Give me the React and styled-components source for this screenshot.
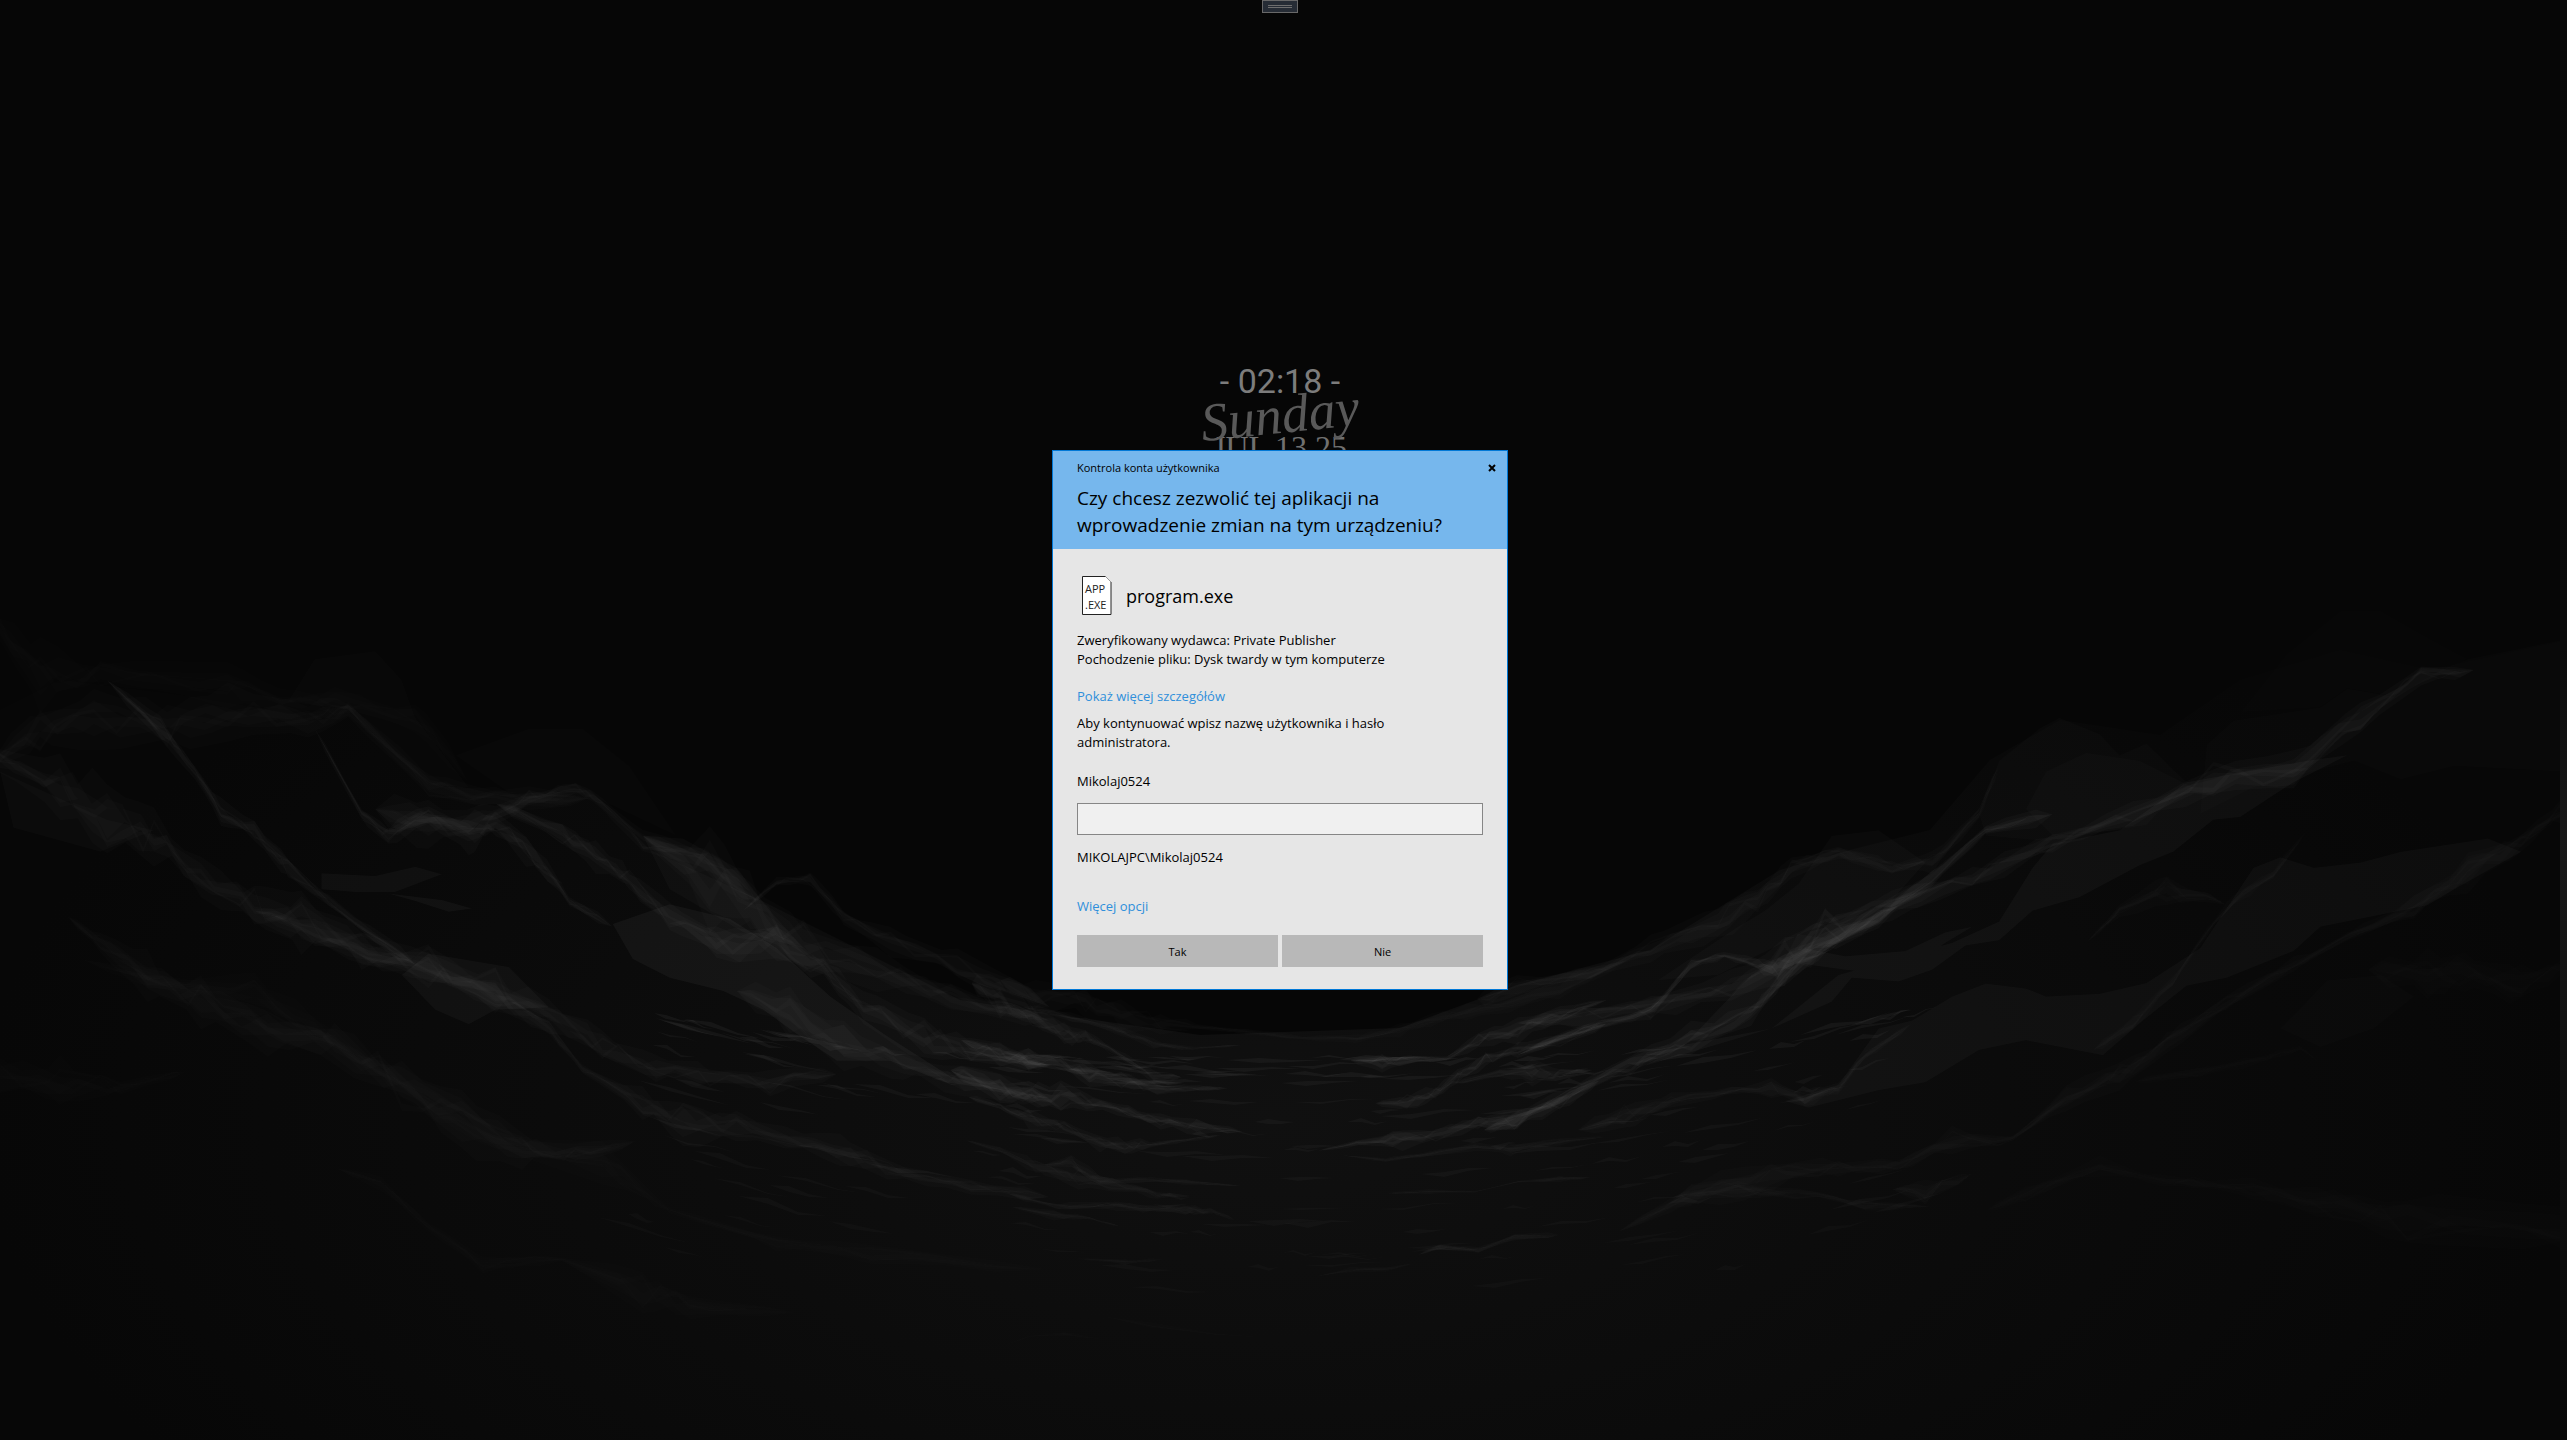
import React from "react";
import styled, { createGlobalStyle } from "styled-components";

const GlobalStyle = createGlobalStyle`
  *, *::before, *::after { box-sizing: border-box; }
  html, body { margin: 0; background: #060606; }
  body { font-family: "Open Sans", "Noto Sans", sans-serif; color: #000; }
  h1, h2, p { margin: 0; font-weight: 400; }
`;

const Desktop = styled.div`
  position: relative;
  display: flex;
  min-height: 100vh;
  overflow: hidden;
`;

const Wallpaper = styled.svg`
  position: absolute;
  inset: 0;
  width: 100%;
  height: 100%;
`;

const Monitor = styled.main`
  position: relative;
  flex: 1;
  display: grid;
  place-items: center;
`;

const NextMonitor = styled.div`
  position: relative;
  width: 7px;
  background: linear-gradient(#090909, #0b0b0b 45%, #181818 58%, #101010 75%, #080808);
`;

const TopHandle = styled.div`
  position: absolute;
  top: 0;
  left: 50%;
  transform: translateX(-50%);
  display: flex;
  flex-direction: column;
  justify-content: center;
  gap: 1px;
  width: 36px;
  height: 13px;
  padding: 0 5px;
  border: 1px solid #686868;
  background: #262c35;
`;

const HandleLine = styled.span`
  height: 1px;
  background: #6e6e6e;
`;

const Clock = styled.div`
  position: absolute;
  top: 359px;
  left: 50%;
  transform: translateX(-50%);
  display: flex;
  flex-direction: column;
  align-items: center;
  white-space: nowrap;
`;

const Time = styled.time`
  font: 34px/44px Roboto, sans-serif;
  color: #7c7c7c;
`;

const Weekday = styled.span`
  margin-top: -18px;
  font: italic 54px/60px "Liberation Serif", serif;
  color: #595959;
  transform: rotate(-6deg);
`;

const CalendarDate = styled.span`
  margin-top: -16px;
  font: 32px/36px "Liberation Serif", serif;
  color: #707070;
`;

const Dialog = styled.section`
  position: relative;
  width: 456px;
  border: 1px solid #0078d7;
  background: #e6e6e6;
`;

const DialogHeader = styled.header`
  padding: 9px 24px 10px;
  background: #76b7ed;
`;

const TitleRow = styled.div`
  display: flex;
  justify-content: space-between;
  align-items: center;
  margin-right: -17px;
`;

const Caption = styled.p`
  font-size: 11px;
  line-height: 16px;
`;

const CloseButton = styled.button`
  display: grid;
  place-items: center;
  width: 16px;
  height: 16px;
  padding: 0;
  border: 0;
  background: none;
`;

const Question = styled.h1`
  margin-top: 9px;
  font-size: 19px;
  line-height: 27px;
`;

const DialogBody = styled.form`
  display: flex;
  flex-direction: column;
  align-items: flex-start;
  padding: 26px 24px 22px;
  font-size: 13px;
  line-height: 19px;
`;

const Program = styled.div`
  display: flex;
  align-items: center;
  gap: 9px;
  height: 40px;
`;

const ProgramName = styled.h2`
  padding-top: 2px;
  font-size: 18px;
  line-height: 27px;
`;

const Details = styled.p`
  margin-top: ${(p) => p.$gap}px;
`;

const ActionLink = styled.a`
  margin-top: ${(p) => p.$gap}px;
  color: #2f8fdb;
  text-decoration: none;
`;

const UserLabel = styled.label`
  margin-top: 20px;
`;

const PasswordInput = styled.input`
  align-self: stretch;
  height: 32px;
  margin-top: 12px;
  padding: 0 8px;
  border: 1px solid #868686;
  border-radius: 0;
  outline: 0;
  background: #f0f0f0;
  font: inherit;
`;

const Buttons = styled.div`
  align-self: stretch;
  display: grid;
  grid-template-columns: 1fr 1fr;
  gap: 4px;
  margin-top: 19px;
`;

const AnswerButton = styled.button`
  height: 32px;
  padding: 1px 0 0;
  border: 0;
  border-radius: 0;
  background: #b8b8b8;
  color: #000;
  font: 11px/16px "Open Sans", "Noto Sans", sans-serif;
`;

/* Ridge lines of the wallpaper: each point is x, y, thickness. */
const leftRidges = [
  { o: 0.015, p: [[0, 60, 40], [60, 140, 70], [150, 135, 30], [340, 160, 40], [420, 185, 20], [500, 190, 30], [620, 220, 40], [700, 340, 20]] },
  { o: 0.022, p: [[0, 290, 20], [60, 240, 50], [140, 220, 60], [250, 230, 50], [340, 210, 50], [460, 225, 40], [520, 205, 20], [640, 345, 30], [740, 370, 30], [880, 370, 20]] },
  { o: 0.035, p: [[160, 150, 10], [240, 240, 24], [290, 320, 14], [330, 395, 26], [380, 430, 20], [430, 500, 24], [530, 600, 14], [620, 680, 20]] },
  { o: 0.035, p: [[470, 240, 10], [540, 400, 14], [580, 440, 22], [640, 400, 30], [700, 440, 44], [740, 415, 36], [800, 480, 30], [850, 560, 14], [915, 610, 12]] },
  { o: 0.03, p: [[560, 390, 40], [640, 420, 50], [720, 410, 26], [790, 370, 22], [860, 350, 16], [900, 380, 14], [960, 450, 20], [1050, 480, 30], [1130, 560, 30]] },
  { o: 0.035, p: [[740, 380, 16], [840, 435, 30], [890, 480, 30], [940, 520, 26], [1000, 590, 26], [1070, 640, 44], [1160, 640, 50], [1230, 690, 26], [1290, 760, 34], [1380, 820, 50], [1450, 840, 30], [1568, 870, 20]] },
  { o: 0.028, p: [[960, 440, 20], [1060, 520, 90], [1120, 560, 90], [1200, 650, 60], [1310, 690, 40], [1420, 740, 30], [1568, 785, 30]] },
  { o: 0.028, p: [[1110, 580, 8], [1160, 525, 12], [1210, 520, 14], [1260, 590, 18], [1330, 640, 26], [1430, 680, 30], [1568, 760, 30]] },
  { o: 0.03, p: [[0, 300, 20], [90, 350, 60], [160, 410, 80], [230, 440, 50], [300, 520, 36], [380, 570, 46], [450, 600, 56], [540, 650, 54], [640, 680, 50], [740, 730, 50], [820, 780, 44], [900, 830, 40], [980, 875, 24], [1060, 890, 26], [1150, 900, 24], [1250, 885, 18]] },
  { o: 0.03, p: [[380, 580, 12], [470, 620, 28], [550, 660, 24], [640, 690, 26], [740, 740, 30], [820, 800, 20], [870, 875, 10], [960, 940, 30], [1020, 980, 46], [1100, 980, 30], [1200, 1010, 20], [1270, 1035, 36], [1350, 1070, 16], [1450, 1095, 18], [1568, 1115, 14]] },
  { o: 0.02, p: [[100, 590, 10], [150, 640, 20], [220, 700, 50], [300, 750, 50], [400, 810, 50], [500, 830, 60], [600, 900, 56], [690, 970, 60], [780, 1030, 34], [860, 1030, 20], [950, 1010, 16]] },
  { o: 0.016, p: [[120, 670, 8], [240, 715, 20], [380, 740, 50], [470, 800, 30], [560, 870, 20], [650, 950, 30], [740, 1010, 24], [900, 1050, 40], [1000, 1140, 6], [1160, 1200, 16], [1300, 1220, 18], [1568, 1250, 10]] },
  { o: 0.014, p: [[500, 1060, 6], [570, 1090, 16], [640, 1170, 12], [720, 1240, 20], [840, 1230, 8], [960, 1290, 50], [1030, 1320, 24], [1190, 1330, 6]] },
  { o: 0.014, p: [[0, 890, 40], [90, 900, 50], [180, 910, 14], [280, 880, 8]] },
  { o: 0.01, p: [[0, 1360, 30], [130, 1420, 40], [300, 1450, 30], [480, 1480, 30], [640, 1520, 14], [900, 1540, 10]] },
  { o: 0.03, p: [[1100, 730, 20], [1180, 770, 60], [1260, 830, 50], [1350, 870, 24], [1440, 900, 30], [1568, 930, 26]] },
];

const leftPlanes = [
  { o: 0.04, d: "M915 605 1000 568 1090 595 1160 650 1240 740 1320 810 1420 890 1500 915 1410 900 1330 860 1250 860 1190 810 1140 765 1080 730 1000 705 945 670Z" },
  { o: 0.03, d: "M600 700 640 660 760 685 820 760 740 765 700 792 650 765Z" },
  { o: 0.018, d: "M0 320 160 410 230 430 150 470 20 425Z" },
  { o: 0.01, d: "M470 110 560 95 600 150 620 220 700 350 640 345 520 205 430 190Z" },
  { o: 0.01, d: "M680 290 790 240 870 240 940 310 1010 440 900 375 760 360Z" },
  { o: 0.025, d: "M960 440 1020 445 1100 500 1150 580 1200 650 1110 620 1000 540Z" },
  { o: 0.03, d: "M480 510 560 515 620 498 660 512 590 545 530 545 480 540Z" },
  { o: 0.035, d: "M580 548 660 560 705 576 670 582 620 562Z" },
];

const rightRidges = [
  { o: 0.03, p: [[-60, 745, 20], [0, 720, 20], [110, 695, 18], [200, 650, 30], [300, 600, 40], [360, 560, 30], [410, 500, 26], [480, 470, 18], [560, 500, 16], [620, 490, 20], [690, 400, 20], [720, 310, 8]] },
  { o: 0.035, p: [[0, 790, 12], [100, 780, 24], [200, 760, 24], [320, 720, 30], [400, 670, 50], [460, 620, 60], [560, 570, 36], [680, 520, 26], [800, 450, 26], [920, 400, 24], [1040, 340, 40], [1160, 320, 40], [1260, 220, 26], [1350, 140, 24], [1430, 130, 14]] },
  { o: 0.04, p: [[0, 850, 12], [100, 800, 14], [200, 770, 14], [260, 680, 12], [310, 662, 10], [360, 680, 14], [390, 690, 30], [460, 630, 40], [540, 590, 30], [620, 520, 20], [700, 430, 14], [800, 400, 20]] },
  { o: 0.045, p: [[-50, 990, 16], [0, 970, 18], [80, 920, 14], [170, 865, 22], [260, 820, 30], [350, 775, 22], [400, 700, 20], [470, 640, 20], [570, 570, 10]] },
  { o: 0.03, p: [[90, 990, 14], [160, 965, 30], [230, 935, 14], [320, 915, 10], [380, 912, 18], [430, 930, 20], [480, 910, 12], [520, 850, 10], [590, 790, 12]] },
  { o: 0.022, p: [[150, 1180, 6], [260, 1110, 34], [380, 1075, 34], [480, 1060, 20], [570, 1055, 14], [650, 1010, 30], [740, 1005, 10], [820, 930, 30], [900, 890, 30], [970, 830, 24], [1060, 750, 18], [1160, 680, 14], [1240, 630, 12], [1340, 570, 30], [1420, 510, 40], [1500, 450, 26], [1558, 395, 20]] },
  { o: 0.022, p: [[860, 840, 10], [920, 790, 18], [980, 710, 12], [1030, 620, 12], [1070, 560, 14], [1130, 510, 12], [1180, 430, 6]] },
  { o: 0.014, p: [[700, 1140, 8], [760, 1110, 20], [870, 1055, 18], [940, 1080, 10], [1010, 1090, 20], [1100, 1100, 20], [1220, 1130, 40], [1330, 1160, 50], [1558, 1170, 50]] },
  { o: 0.01, p: [[620, 1300, 6], [710, 1260, 10], [790, 1170, 14], [900, 1120, 40], [1000, 1150, 30], [1100, 1180, 30], [1260, 1210, 50], [1400, 1205, 20], [1558, 1210, 14]] },
  { o: 0.022, p: [[560, 1100, 10], [610, 1105, 28], [680, 1070, 8]] },
  { o: 0.022, p: [[230, 1115, 8], [330, 1100, 24], [450, 1110, 8], [520, 1130, 12], [620, 1132, 5]] },
  { o: 0.016, p: [[920, 900, 12], [1020, 880, 16], [1120, 855, 10], [1170, 835, 8], [1200, 865, 4]] },
  { o: 0.012, p: [[1270, 690, 30], [1360, 700, 50], [1430, 700, 40], [1500, 715, 40], [1558, 690, 24]] },
  { o: 0.022, p: [[850, 640, 4], [900, 580, 14], [970, 540, 30], [1060, 570, 8]] },
];

const rightPlanes = [
  { o: 0.026, d: "M480 905 540 800 590 785 650 740 700 716 760 725 790 740 870 735 940 715 1020 650 1100 500 1140 480 1190 500 1260 490 1320 470 1450 445 1500 470 1400 540 1360 570 1200 610 1160 655 1060 705 1000 720 930 790 875 850 760 822 690 840 610 900 540 915 435 948 400 935Z" },
  { o: 0.032, d: "M190 870 270 815 350 770 400 715 430 680 490 690 570 700 640 640 680 610 640 620 580 655 490 665 430 650 350 700 250 830 380 800 470 750 500 705 570 712 620 690 670 645 720 635 770 580 840 555 930 495 980 470 1040 410 1080 405 1160 340 1240 290 1180 300 1000 340 900 430 800 455 770 500 720 600 650 640 480 700 380 800Z" },
  { o: 0.014, d: "M690 400 720 300 780 240 810 220 870 250 900 290 940 268 1000 340 940 420 790 450 700 440Z" },
  { o: 0.016, d: "M760 390 790 320 850 285 930 300 1010 350 900 430 800 440Z" },
  { o: 0.01, d: "M1030 270 1070 225 1200 200 1240 165 1310 180 1380 130 1420 110 1558 75 1558 320 1400 310 1320 335 1250 300 1100 350 1020 400Z" },
  { o: 0.008, d: "M1080 210 1150 100 1230 20 1290 20 1360 70 1420 110 1310 180 1240 165 1200 200Z" },
  { o: 0.012, d: "M1140 800 1210 710 1290 700 1340 740 1280 800 1200 835Z" },
  { o: 0.018, d: "M420 530 470 440 540 430 610 490 560 560 430 620 300 700 210 710 330 610 370 580Z" },
];

const centerRidges = [
  { o: 0.035, p: [[-80, 10, 50], [0, 60, 50], [90, 110, 40], [180, 160, 44], [240, 170, 26], [330, 220, 14], [430, 290, 20], [510, 292, 16]] },
  { o: 0.022, p: [[0, 0, 50], [100, 50, 60], [240, 70, 60], [340, 110, 60], [450, 130, 30], [550, 140, 14], [690, 155, 12], [850, 175, 10], [1000, 175, 16], [1120, 150, 22], [1240, 110, 24], [1350, 90, 30], [1568, 20, 40], [1760, -60, 30]] },
  { o: 0.03, p: [[60, 80, 10], [200, 110, 20], [330, 150, 16], [430, 190, 18], [540, 205, 6], [680, 195, 8]] },
  { o: 0.045, p: [[-110, 180, 34], [0, 225, 34], [80, 240, 44], [170, 250, 26], [250, 280, 44], [340, 300, 36], [440, 325, 22], [560, 325, 12], [640, 325, 4]] },
  { o: 0.04, p: [[-140, 270, 40], [0, 330, 50], [90, 350, 40], [170, 350, 60], [260, 370, 20], [360, 395, 22], [450, 425, 26], [550, 440, 26], [680, 455, 8]] },
  { o: 0.035, p: [[-90, 350, 14], [0, 380, 14], [80, 415, 30], [180, 440, 20], [280, 490, 28], [350, 500, 34], [420, 495, 10], [520, 480, 8], [620, 465, 3]] },
  { o: 0.04, p: [[980, 240, 8], [1070, 250, 28], [1150, 240, 16], [1250, 235, 10], [1340, 180, 30], [1450, 150, 40], [1568, 100, 20], [1700, 60, 16]] },
  { o: 0.045, p: [[1050, 370, 6], [1140, 370, 30], [1220, 340, 26], [1280, 290, 26], [1360, 240, 30], [1450, 210, 22], [1568, 180, 22], [1700, 130, 16]] },
  { o: 0.035, p: [[1270, 310, 14], [1400, 280, 14], [1490, 275, 40], [1568, 280, 20], [1660, 270, 10]] },
  { o: 0.04, p: [[890, 512, 4], [1000, 490, 14], [1100, 480, 36], [1220, 465, 30], [1340, 430, 26], [1440, 420, 36], [1568, 370, 30], [1680, 300, 16]] },
  { o: 0.03, p: [[-100, 480, 8], [0, 510, 10], [100, 560, 30], [220, 595, 30], [350, 620, 24], [440, 645, 14], [540, 648, 5]] },
  { o: 0.03, p: [[20, 640, 10], [160, 680, 12], [300, 675, 20], [400, 685, 16], [520, 690, 26], [590, 690, 12], [660, 722, 4]] },
  { o: 0.026, p: [[120, 555, 4], [200, 545, 26], [280, 600, 20], [430, 600, 10], [550, 608, 12], [680, 618, 4]] },
  { o: 0.026, p: [[30, 680, 4], [150, 705, 18], [250, 715, 6], [340, 740, 3]] },
  { o: 0.026, p: [[1080, 640, 3], [1200, 635, 8], [1330, 635, 3], [1450, 605, 4], [1568, 598, 12], [1660, 590, 6]] },
  { o: 0.026, p: [[1170, 825, 4], [1230, 800, 16], [1340, 810, 12], [1440, 770, 18], [1568, 765, 6]] },
  { o: 0.02, p: [[880, 890, 3], [980, 870, 10], [1080, 868, 10], [1160, 850, 3]] },
  { o: 0.026, p: [[950, 525, 3], [1080, 540, 8], [1180, 525, 14], [1330, 500, 14], [1430, 510, 20], [1568, 485, 10], [1700, 470, 6]] },
  { o: 0.02, p: [[210, 835, 3], [350, 845, 12], [460, 838, 3]] },
  { o: 0.014, p: [[270, 1005, 3], [420, 1035, 10], [600, 1062, 4], [740, 1072, 2]] },
  { o: 0.014, p: [[0, 1100, 2], [80, 1070, 5], [180, 1062, 8], [300, 1078, 2]] },
];

const random = (seed) => {
  let s = seed;
  return () => {
    s = (s * 16807) % 2147483647;
    return s / 2147483647;
  };
};

const ribbon = (points, spread, scale, rnd, edges) => {
  const upper = [];
  const lower = [];
  points.forEach(([x, y, t], i) => {
    const isEnd = i === 0 || i === points.length - 1;
    const tapers = isEnd && !edges.includes(x);
    const shift = tapers ? 0 : (rnd() - 0.5) * t * spread;
    const half = tapers ? 0 : (t * scale * (0.5 + rnd())) / 2;
    upper.push([x, y + shift - half]);
    lower.unshift([x, y + shift + half]);
    const next = points[i + 1];
    if (next) {
      const cuts = [0.2 + rnd() * 0.2, 0.6 + rnd() * 0.2];
      cuts.forEach((k) => {
        const mx = x + (next[0] - x) * k;
        const my = y + (next[1] - y) * k + (rnd() - 0.5) * t * (0.3 + spread * 0.4);
        const mt = ((t + (next[2] - t) * k) / 2) * scale * (0.5 + rnd() * 0.8);
        upper.push([mx, my - mt]);
        lower.unshift([mx, my + mt]);
      });
    }
  });
  return "M" + [...upper, ...lower].map((p) => p.map(Math.round).join(" ")).join("L") + "Z";
};

const layers = [
  [0.2, 1.5],
  [0.6, 0.9],
  [1, 0.55],
  [1.3, 0.3],
  [1.7, 0.18],
];

function Ridges({ items, seed, edges = [] }) {
  const rnd = random(seed);
  return items.flatMap(({ o, p }, i) =>
    layers.map(([spread, scale], j) => (
      <path key={`${i}-${j}`} d={ribbon(p, spread, scale, rnd, edges)} fill="#fff" fillOpacity={o * 0.56} />
    ))
  );
}

function Planes({ items }) {
  return items.map(({ o, d }) => <path key={d} d={d} fill="#fff" fillOpacity={o} />);
}

/* Short ripples on the valley floor, following its slope. */
function Ripples() {
  const rnd = random(4711);
  return Array.from({ length: 190 }, (_, i) => {
    const x = 640 + rnd() * 1280;
    const off = (x - 1280) / 760;
    const depth = rnd();
    const y = 1054 - off * off * 110 + depth * depth * 240 + Math.abs(off) * 40;
    const w = 14 + rnd() * 36;
    const slope = -off * 0.34;
    const h = 1 + rnd() * 2;
    const rise = (rnd() - 0.5) * 5;
    const at = (dx, dy) => `${Math.round(x + dx)} ${Math.round(y + dx * slope + dy)}`;
    const d = `M${at(-w, 0)}L${at(-w / 3, rise - h)}L${at(w / 3, -rise)}L${at(w, 0)}L${at(w / 3, h - rise)}L${at(-w / 3, rise + h)}Z`;
    return <path key={i} d={d} fill="#fff" fillOpacity={0.045 * (1 - depth * 0.6)} />;
  });
}

function Mountains() {
  return (
    <Wallpaper viewBox="0 0 2567 1440" preserveAspectRatio="xMidYMid slice" aria-hidden="true">
      <defs>
        <radialGradient id="floor" cx="1280" cy="1120" r="1300" gradientUnits="userSpaceOnUse" gradientTransform="translate(0 560) scale(1 .5)">
          <stop offset="0" stopColor="#101010" />
          <stop offset="0.45" stopColor="#0c0c0c" />
          <stop offset="1" stopColor="#070707" />
        </radialGradient>
      </defs>
      <rect width="2567" height="1440" fill="#060606" />
      <path
        fill="url(#floor)"
        d="M0 710 60 680 180 695 300 715 350 705 430 780 500 795 590 790 650 850 760 900 860 950 960 1000 1080 1018 1200 1035 1400 1028 1517 985 1650 950 1780 870 1850 850 1930 830 1990 760 2060 720 2160 735 2240 680 2340 650 2430 670 2567 640V1440H0Z"
      />
      <g transform="translate(0 600) scale(.6696 .5357)">
        <Planes items={leftPlanes} />
        <Ridges items={leftRidges} seed={17} edges={[0]} />
      </g>
      <g transform="translate(1517 600) scale(.6696 .5357)">
        <Planes items={rightPlanes} />
        <Ridges items={rightRidges} seed={91} edges={[1558]} />
      </g>
      <g transform="translate(1000 980) scale(.3571 .3333)">
        <Ridges items={centerRidges} seed={53} />
      </g>
      <Ripples />
    </Wallpaper>
  );
}

function ProgramIcon() {
  return (
    <svg width="40" height="40" viewBox="0 0 40 40" role="img" aria-label="APP .EXE">
      <path d="M5.500 1.500H28.500L34 7V39.500H5.500Z" fill="#fff" stroke="#222" />
      <path d="M28.500 1.500 34 7" stroke="#999" fill="none" />
      <g fontFamily="Open Sans, sans-serif" fontSize="11" fill="#222">
        <text x="8" y="18">APP</text>
        <text x="8" y="34">.EXE</text>
      </g>
    </svg>
  );
}

export default function App() {
  return (
    <Desktop>
      <GlobalStyle />
      <Mountains />
      <Monitor>
        <TopHandle>
          <HandleLine />
          <HandleLine />
        </TopHandle>
        <Clock>
          <Time>- 02:18 -</Time>
          <Weekday>Sunday</Weekday>
          <CalendarDate>JUL 13 25</CalendarDate>
        </Clock>
        <Dialog role="dialog" aria-labelledby="question">
          <DialogHeader>
            <TitleRow>
              <Caption>Kontrola konta użytkownika</Caption>
              <CloseButton type="button" aria-label="Zamknij">
                <svg width="8" height="8" viewBox="0 0 8 8">
                  <path d="M1 1 7 7M7 1 1 7" stroke="#000" strokeWidth="2" />
                </svg>
              </CloseButton>
            </TitleRow>
            <Question id="question">
              Czy chcesz zezwolić tej aplikacji na
              <br />
              wprowadzenie zmian na tym urządzeniu?
            </Question>
          </DialogHeader>
          <DialogBody onSubmit={(e) => e.preventDefault()}>
            <Program>
              <ProgramIcon />
              <ProgramName>program.exe</ProgramName>
            </Program>
            <Details $gap={16}>
              Zweryfikowany wydawca: Private Publisher
              <br />
              Pochodzenie pliku: Dysk twardy w tym komputerze
            </Details>
            <ActionLink $gap={18} href="#details">Pokaż więcej szczegółów</ActionLink>
            <Details $gap={8}>
              Aby kontynuować wpisz nazwę użytkownika i hasło
              <br />
              administratora.
            </Details>
            <UserLabel htmlFor="password">Mikolaj0524</UserLabel>
            <PasswordInput id="password" type="password" />
            <Details $gap={13}>MIKOLAJPC\Mikolaj0524</Details>
            <ActionLink $gap={30} href="#options">Więcej opcji</ActionLink>
            <Buttons>
              <AnswerButton type="submit">Tak</AnswerButton>
              <AnswerButton type="button">Nie</AnswerButton>
            </Buttons>
          </DialogBody>
        </Dialog>
      </Monitor>
      <NextMonitor />
    </Desktop>
  );
}
